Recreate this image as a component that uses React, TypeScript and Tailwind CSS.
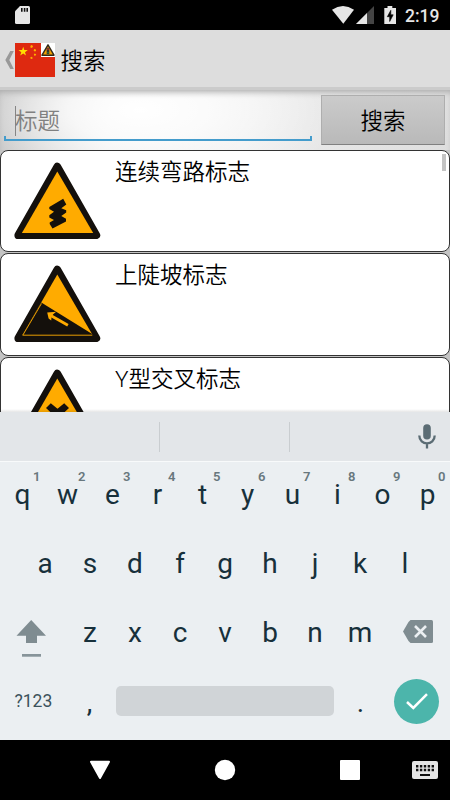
import type { ReactNode } from "react";

const BLACK = "#14100c";
const AMBER = "#ffab00";

function WarningSign({ children }: { children: ReactNode }) {
  return (
    <svg width="88" height="78" viewBox="0 0 88 78" className="shrink-0">
      <path
        d="M44.3 4.6 L83.3 73.2 H5.3 Z"
        fill={BLACK}
        stroke={BLACK}
        strokeWidth="7.8"
        strokeLinejoin="round"
      />
      <path d="M44.3 9.5 L80.2 71 H8.9 Z" fill={AMBER} />
      {children}
    </svg>
  );
}

const signs = [
  {
    title: "连续弯路标志",
    picture: (
      <path
        d="M50.2 36.7 L53.3 42.5 L48.3 46.2 L53.2 48.2 V50.5 L48.3 54 L53 56.8 V59.4 L39.5 66.5 L36.7 62 V60.5 L41 58 L36.3 55.5 V53.2 L41 49.8 L36.3 47 V45 Z"
        fill={BLACK}
      />
    ),
  },
  {
    title: "上陡坡标志",
    picture: (
      <>
        <path d="M28.3 37.5 L80 69.5 L80.5 71.5 H8.5 Z" fill={BLACK} />
        <path
          d="M28.5 38.5 L9.8 70.2 H79.3"
          fill="none"
          stroke={AMBER}
          strokeWidth="0.9"
        />
        <path
          d="M54.9 60.3 L37.3 50.2"
          fill="none"
          stroke={AMBER}
          strokeWidth="2.8"
        />
        <path
          d="M34.2 47.4 L43.2 46.8 L40.2 49.3 L38.6 51.6 L38.2 55.6 L35.6 53.6 Z"
          fill={AMBER}
        />
      </>
    ),
  },
  {
    title: "Y型交叉标志",
    picture: (
      <path
        d="M33 39 L37.8 34.2 L44.5 39.7 L51.2 34.2 L56 39 L48.5 46 V66 H40.5 V46 Z"
        fill={BLACK}
      />
    ),
  },
];

const topRow = ["q", "w", "e", "r", "t", "y", "u", "i", "o", "p"];
const homeRow = ["a", "s", "d", "f", "g", "h", "j", "k", "l"];
const bottomRow = ["z", "x", "c", "v", "b", "n", "m"];

function Key({ label, hint }: { label: string; hint?: string }) {
  return (
    <div className="relative flex w-[45px] items-center justify-center">
      {label}
      {hint && (
        <span className="absolute top-[7px] right-[4.5px] text-[13px] leading-[15px] font-semibold text-[#68777d]">
          {hint}
        </span>
      )}
    </div>
  );
}

function StatusBar() {
  return (
    <div className="flex h-[30px] shrink-0 items-center bg-black pl-[15px]">
      <svg width="15" height="18" viewBox="0 0 15 18">
        <path
          d="M5 0 H13.5 Q15 0 15 1.5 V16.5 Q15 18 13.5 18 H1.5 Q0 18 0 16.5 V5.2 Z"
          fill="#e6e6e6"
        />
        <path d="M6 2 h1.6 v3.7 H6z M8.8 2 h1.6 v3.7 H8.8z M11.4 2 H13 v3.7 h-1.6z" fill="#111" />
      </svg>
      <svg width="64" height="18" viewBox="0 0 64 18" className="ml-auto">
        <path d="M0 3.7 Q11 -3.7 22 3.7 L11.3 17.8 Z" fill="#e6e6e6" />
        <path d="M42 0 V18 H24 Z" fill="#444" />
        <path d="M35 7 V18 H24 Z" fill="#e6e6e6" />
        <path d="M55.5 0 h4.8 v2 H64 V18 H52.3 V2 h3.2 Z" fill="#e6e6e6" />
        <path d="M58.8 4.3 L55.3 10.7 H57.7 V15.5 L61.2 8.8 H58.8 Z" fill="#000" stroke="#000" strokeWidth="0.6" />
      </svg>
      <span className="mr-[10px] ml-[9px] w-[35px] pt-[2px] text-[17.5px] leading-[28px] font-medium text-[#e6e6e6]">
        2:19
      </span>
    </div>
  );
}

function Flag() {
  return (
    <svg width="40" height="34" viewBox="0 0 40 34">
      <rect width="40" height="34" fill="#de2910" />
      <path
        d="M8.2 3.8 L9.3 7.1 H12.8 L10 9.2 L11 12.6 L8.2 10.5 L5.2 12.6 L6.3 9.2 L3.5 7.1 H7.1 Z"
        fill="#ffde00"
      />
      <g fill="#ffb000">
        <path d="M16 2 l1.5 .6 .5 1.1 -1.2 1.3 -1.6 -.7 Z" />
        <path d="M19.2 6 l1.7 .6 .2 1.3 -1.5 .6 -1 -1.1 Z" />
        <path d="M19.7 10.4 l1.5 .8 -.5 1.4 -1.5 .1 -.3 -1.4 Z" />
        <path d="M16.2 13.7 l1.4 .9 -.3 1.4 -1.6 -.2 -.4 -1.2 Z" />
      </g>
      <rect x="26" width="14" height="14" fill="#fff" />
      <path d="M33 1.8 L39 12.2 H27 Z" fill="#f5a000" stroke="#33291a" strokeWidth="1.4" strokeLinejoin="round" />
      <rect x="31.7" y="4.8" width="2.6" height="6.3" fill="#333" />
      <circle cx="33" cy="6" r="0.8" fill="#e33" />
      <circle cx="33" cy="9.8" r="0.8" fill="#2a8a3a" />
    </svg>
  );
}

function Keyboard() {
  return (
    <div className="flex h-[328px] shrink-0 flex-col bg-[#ebeff2] text-[28px] leading-none text-[#17303b]">
      <div className="flex h-[50px] shrink-0 items-center border-b border-[#f8fafb] bg-[#e3e6e9]">
        <div className="h-[30px] w-[160px] border-r border-[#c9cdd0]" />
        <div className="h-[30px] w-[130px] border-r border-[#c9cdd0]" />
        <svg width="18" height="25" viewBox="0 0 18 25" className="mr-[14px] ml-auto">
          <rect x="5.2" y="0.3" width="7.6" height="15.2" rx="3.8" fill="#5b6c74" />
          <path
            d="M1.3 11.6 C1.3 22 16.7 22 16.7 11.6 M9 19 V24.4"
            fill="none"
            stroke="#5b6c74"
            strokeWidth="2.3"
          />
        </svg>
      </div>

      <div className="flex h-[68px] pb-[2px]">
        {topRow.map((letter, i) => (
          <Key key={letter} label={letter} hint={String((i + 1) % 10)} />
        ))}
      </div>
      <div className="flex h-[69px] justify-center pb-[2px]">
        {homeRow.map((letter) => (
          <Key key={letter} label={letter} />
        ))}
      </div>
      <div className="flex h-[68px] items-stretch">
        <div className="flex w-[67.5px] items-center pl-[16px]">
          <svg width="30" height="38" viewBox="0 0 30 38" className="mt-[12px]">
            <path d="M15.2 0 L30 15.7 H21 V23 H10 V15.7 H0.5 Z" fill="#7f8c91" />
            <rect x="6" y="34" width="19" height="2.7" fill="#87949a" />
          </svg>
        </div>
        {bottomRow.map((letter) => (
          <Key key={letter} label={letter} />
        ))}
        <div className="flex flex-1 items-center pb-[3px] pl-[20px]">
          <svg width="30" height="23" viewBox="0 0 30 23">
            <path d="M7.5 0 H28.5 Q30 0 30 1.5 V21.5 Q30 23 28.5 23 H7.5 L5.5 21 L0 11.5 L5.5 2 Z" fill="#7f8c91" />
            <path d="M12 6 L23 17 M23 6 L12 17" stroke="#ebeff2" strokeWidth="2.6" />
          </svg>
        </div>
      </div>
      <div className="flex h-[69px] items-center pb-px">
        <span className="w-[67px] pt-[2px] pl-[14.5px] text-[17.5px] text-[#3c525c]">?123</span>
        <div className="pt-[3px]">
          <Key label="," />
        </div>
        <div className="mx-[4px] h-[30px] w-[218px] rounded-[5px] bg-[#d0d4d7]" />
        <div className="pt-[3px]">
          <Key label="." />
        </div>
        <div className="ml-[11px] flex size-[45px] items-center justify-center rounded-full bg-[#4cb5ab]">
          <svg width="22" height="17" viewBox="0 0 22 17">
            <path d="M1 9 L7.3 15 L21 1.2" fill="none" stroke="#fff" strokeWidth="2.5" />
          </svg>
        </div>
      </div>
    </div>
  );
}

function NavBar() {
  return (
    <div className="h-[60px] shrink-0 bg-black">
      <svg width="450" height="60" viewBox="0 0 450 60">
        <path d="M91 21.8 H109 L100 38 Z" fill="#fff" stroke="#fff" strokeWidth="2" strokeLinejoin="round" />
        <circle cx="225" cy="30" r="10.2" fill="#fff" />
        <rect x="340" y="20" width="20" height="20" rx="1" fill="#fff" />
        <rect x="412" y="21" width="26" height="18" rx="2" fill="#e6e6e6" />
        <path
          d="M416 26.2 H434 M416 30 H434"
          stroke="#111"
          strokeWidth="2.4"
          strokeDasharray="2.4 1.5"
        />
        <rect x="420" y="34" width="10" height="2" fill="#111" />
      </svg>
    </div>
  );
}

export default function App() {
  return (
    <div className="flex h-[800px] w-[450px] flex-col overflow-hidden bg-[#dcdcdc] font-[Roboto,'Noto_Sans_CJK_SC',sans-serif]">
      <StatusBar />

      <header className="flex h-[60px] shrink-0 items-center border-b-[3px] border-[#cbcbcb] bg-[#dddddd] pt-[2px] pl-[5px]">
        <svg width="10" height="18" viewBox="0 0 10 18">
          <path d="M5.3 0 H8.8 L4.3 9 L8.8 18 H5.3 L0.3 9 Z" fill="#999" />
        </svg>
        <Flag />
        <h1 className="mt-[2px] ml-[5.5px] text-[22.5px] leading-[30px] font-[350] text-black">搜索</h1>
      </header>

      <div className="flex h-[60px] shrink-0 bg-[radial-gradient(ellipse_200px_90px_at_140px_20px,#ffffff_0%,#ffffffcc_35%,transparent_100%),linear-gradient(100deg,#b8b8b8,#e6e6e6_25%,#ececec_55%,#dedede)] shadow-[inset_0_5px_6px_-3px_#aaaaaa]">
        <div className="mt-[9px] ml-[4px] flex h-[42px] w-[308px] flex-col justify-end">
          <div className="flex flex-1 items-center pt-[6px] pl-[11px]">
            <div className="h-[30px] w-px bg-[#858585]" />
            <span className="-ml-px pt-px text-[22.5px] leading-[30px] font-[350] text-[#808080]">标题</span>
          </div>
          <div className="h-[6px] border-x-2 border-b-2 border-[#449ccc]" />
        </div>
        <button
          type="button"
          className="mt-[5px] ml-[9px] h-[50px] w-[124px] border border-[#aeaeae] border-b-[#808080] bg-linear-to-b from-[#cbcbcb] to-[#b9b9b9] pt-px text-[22.5px] leading-[30px] font-[350] text-black"
        >
          搜索
        </button>
      </div>

      <div className="relative flex h-[262px] shrink-0 flex-col gap-px overflow-hidden bg-[#c4c4c4]">
        {signs.map((sign) => (
          <div
            key={sign.title}
            className="flex h-[102.4px] shrink-0 rounded-[8px] border border-[#333] bg-white pt-[11px] pl-[12px]"
          >
            <WarningSign>{sign.picture}</WarningSign>
            <span className="-mt-[5px] ml-[14px] text-[22.5px] leading-[30px] font-[350] text-black">
              {sign.title}
            </span>
          </div>
        ))}
        <div className="absolute top-[4px] right-[4px] h-[17px] w-[4px] bg-[#c3c3c3]" />
        <div className="absolute inset-x-0 bottom-0 h-[3px] bg-linear-to-b from-transparent to-black/10" />
      </div>

      <Keyboard />
      <NavBar />
    </div>
  );
}
